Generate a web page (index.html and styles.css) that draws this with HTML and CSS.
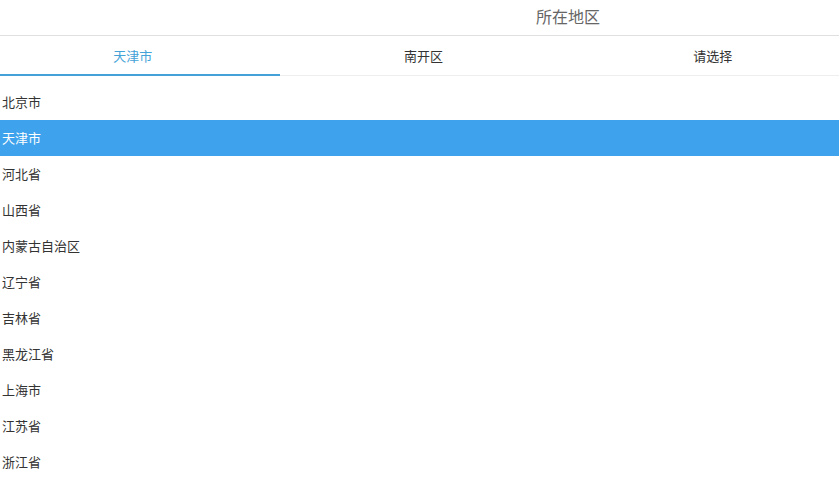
FILE: index.html
```html
<!DOCTYPE html>
<html lang="zh-CN">
<head>
<meta charset="utf-8">
<title>所在地区</title>
<link rel="stylesheet" href="styles.css">
</head>
<body>
<div class="picker">
  <div class="header"><span class="title">所在地区</span></div>
  <div class="tabs">
    <div class="tab tab-1 active">天津市</div>
    <div class="tab tab-2">南开区</div>
    <div class="tab tab-3">请选择</div>
  </div>
  <ul class="list">
    <li class="item">北京市</li>
    <li class="item selected">天津市</li>
    <li class="item">河北省</li>
    <li class="item">山西省</li>
    <li class="item">内蒙古自治区</li>
    <li class="item">辽宁省</li>
    <li class="item">吉林省</li>
    <li class="item">黑龙江省</li>
    <li class="item">上海市</li>
    <li class="item">江苏省</li>
    <li class="item">浙江省</li>
    <li class="item">安徽省</li>
    <li class="item">福建省</li>
  </ul>
</div>
</body>
</html>
```
FILE: styles.css
```css
html, body {
  margin: 0;
  padding: 0;
  background: #fff;
  overflow: hidden;
}
body {
  font-family: "Noto Sans CJK SC", "Noto Sans", sans-serif;
  color: #333;
}
.picker {
  width: 839px;
  height: 491px;
  overflow: hidden;
}
.header {
  height: 35px;
  border-bottom: 1px solid #e0e0e0;
  display: flex;
  align-items: center;
  justify-content: center;
  padding-left: 297px;
}
.title {
  font-size: 16px;
  color: #666;
  line-height: 20px;
  margin-top: -3px;
}
.tabs {
  display: grid;
  grid-template-columns: repeat(3, minmax(0, 1fr));
  height: 39px;
  border-bottom: 1px solid #eee;
}
.tab {
  font-size: 13px;
  color: #333;
  display: flex;
  align-items: center;
  justify-content: center;
  min-width: 0;
}
.tab-1 { padding-right: 14px; }
.tab-2 { padding-left: 8px; }
.tab-3 { padding-left: 27px; }
.tab.active {
  color: #45a2d8;
  margin-bottom: -1px;
  border-bottom: 2px solid #45a2d8;
}
.list {
  list-style: none;
  margin: 0;
  padding: 8px 0 0 0;
}
.item {
  height: 36px;
  line-height: 36px;
  padding-left: 2px;
  font-size: 13px;
  color: #333;
}
.item.selected {
  background: #3ea2ec;
  color: #fff;
}
```
